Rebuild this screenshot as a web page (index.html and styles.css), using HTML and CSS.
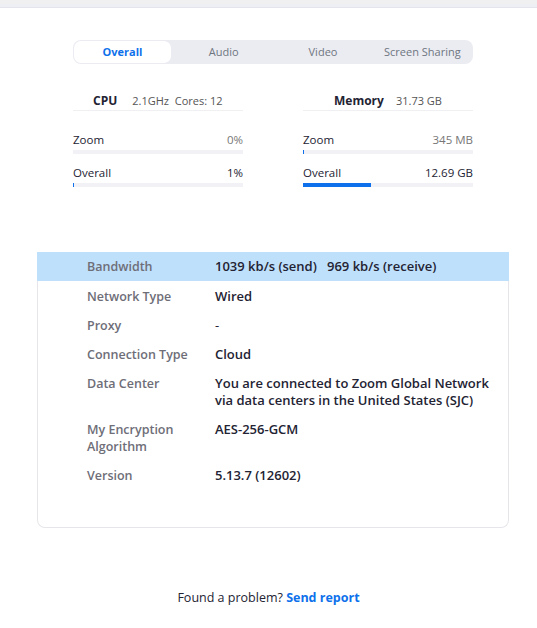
FILE: index.html
```html
<!DOCTYPE html>
<html>
<head>
<meta charset="utf-8">
<link rel="stylesheet" href="styles.css">
</head>
<body>
<div class="topbar"></div>
<div class="page">
  <div class="tabs">
    <div class="tab active">Overall</div>
    <div class="tab">Audio</div>
    <div class="tab">Video</div>
    <div class="tab">Screen Sharing</div>
  </div>

  <div class="stats">
    <div class="col">
      <div class="col-head"><span class="head-label cpu">CPU</span><span class="head-val">2.1GHz&nbsp;&nbsp;Cores: 12</span></div>
      <div class="metric">
        <div class="metric-row"><span>Zoom</span><span class="muted">0%</span></div>
        <div class="bar"><div class="fill" style="width:0%"></div></div>
      </div>
      <div class="metric">
        <div class="metric-row"><span>Overall</span><span>1%</span></div>
        <div class="bar"><div class="fill" style="width:1px"></div></div>
      </div>
    </div>
    <div class="col">
      <div class="col-head mem"><span class="head-label">Memory</span><span class="head-val">31.73 GB</span></div>
      <div class="metric">
        <div class="metric-row"><span>Zoom</span><span class="muted">345 MB</span></div>
        <div class="bar"><div class="fill" style="width:1px"></div></div>
      </div>
      <div class="metric">
        <div class="metric-row"><span>Overall</span><span>12.69 GB</span></div>
        <div class="bar"><div class="fill" style="width:40%"></div></div>
      </div>
    </div>
  </div>

  <div class="card">
    <div class="row hl"><div class="label">Bandwidth</div><div class="value">1039 kb/s (send)&nbsp;&nbsp;&nbsp;969 kb/s (receive)</div></div>
    <div class="row"><div class="label">Network Type</div><div class="value">Wired</div></div>
    <div class="row"><div class="label">Proxy</div><div class="value plain">-</div></div>
    <div class="row"><div class="label">Connection Type</div><div class="value">Cloud</div></div>
    <div class="row"><div class="label">Data Center</div><div class="value">You are connected to Zoom Global Network via data centers in the United States (SJC)</div></div>
    <div class="row"><div class="label">My Encryption Algorithm</div><div class="value">AES-256-GCM</div></div>
    <div class="row"><div class="label">Version</div><div class="value">5.13.7 (12602)</div></div>
  </div>

  <div class="footer">Found a problem? <a class="link">Send report</a></div>
</div>
</body>
</html>
```

FILE: styles.css
```css
* { box-sizing: border-box; }
html, body { margin: 0; padding: 0; background: #fff; }
body {
  font-family: "Open Sans", "Noto Sans", "Liberation Sans", sans-serif;
  font-size: 12px;
  color: #232333;
  width: 537px;
  height: 628px;
  overflow: hidden;
}
.topbar {
  height: 8px;
  background: linear-gradient(#f0f0f0 0 4px, #eeeef5 4px 7px, #e4e4ec 7px 8px);
}
.page { padding-top: 32px; }
.tabs {
  width: 400px;
  margin-left: 73px;
  height: 24px;
  background: #ebebf2;
  border-radius: 8px;
  padding: 1px;
  display: flex;
}
.tab {
  flex: 1;
  display: flex;
  align-items: center;
  justify-content: center;
  color: #6e7680;
  font-size: 11px;
  padding-bottom: 1px;
  border-radius: 7px;
}
.tab.active {
  background: #fff;
  color: #0e71eb;
  font-weight: 700;
  flex: 0 0 97px;
  margin-right: 3px;
}
.stats {
  display: flex;
  gap: 60px;
  margin-left: 73px;
  margin-top: 27px;
}
.col { width: 170px; }
.col-head {
  display: flex;
  gap: 15px;
  padding-left: 20px;
  height: 20px;
  align-items: center;
  border-bottom: 1px solid #f0f0f3;
  font-size: 11.5px;
}
.col-head.mem { padding-left: 31px; gap: 12px; }
.head-label { font-weight: 700; color: #232333; font-size: 12px; }
.head-val { color: #555; font-size: 11px; }
.metric { margin-top: 20px; font-size: 11.5px; }
.metric + .metric { margin-top: 10px; }
.metric-row {
  display: flex;
  justify-content: space-between;
  height: 17px;
  align-items: center;
  color: #232333;
}
.muted { color: #777; }
.bar {
  margin-top: 2px;
  height: 4px;
  background: #f1f1f6;
}
.fill { height: 100%; background: #0e71eb; }
.card {
  margin: 65px 0 0 37px;
  width: 472px;
  height: 276px;
  border: 1px solid #e6e6ea;
  border-top: none;
  border-radius: 0 0 8px 8px;
}
.row {
  display: flex;
  padding: 6px 0 6px 49px;
  line-height: 17px;
}
.row.hl {
  background: #bfe0fb;
  padding-top: 6px;
  padding-bottom: 6px;
  margin: 0 -1px 1px;
  padding-left: 50px;
}
.label {
  width: 128px;
  color: #6e6e78;
  font-weight: 600;
  font-size: 12.5px;
  flex-shrink: 0;
}
.value {
  color: #232333;
  font-weight: 600;
  font-size: 13px;
  width: 275px;
}
.value.plain { font-weight: 400; }
.footer {
  margin-top: 61px;
  text-align: center;
  font-size: 12.5px;
  color: #232333;
}
.link { color: #0e71eb; font-weight: 700; }
```
